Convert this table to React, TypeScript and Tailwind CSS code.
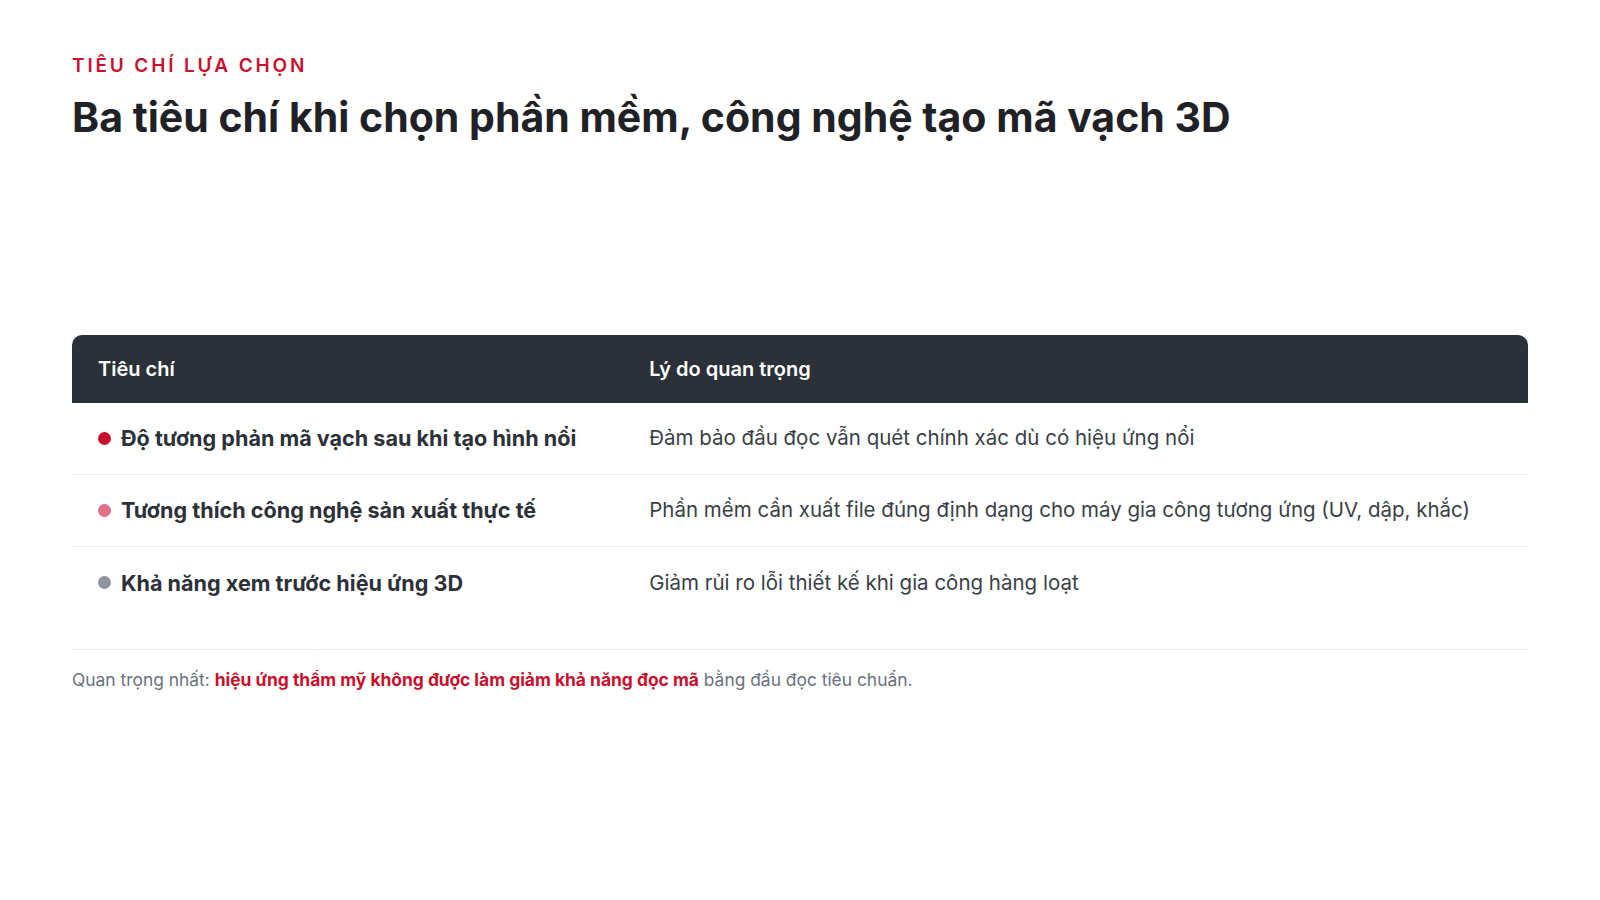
import React from 'react';

const rows = [
  {
    dot: 'bg-[#c8102e]',
    title: 'Độ tương phản mã vạch sau khi tạo hình nổi',
    reason: 'Đảm bảo đầu đọc vẫn quét chính xác dù có hiệu ứng nổi',
  },
  {
    dot: 'bg-[#e07189]',
    title: 'Tương thích công nghệ sản xuất thực tế',
    reason: 'Phần mềm cần xuất file đúng định dạng cho máy gia công tương ứng (UV, dập, khắc)',
  },
  {
    dot: 'bg-[#8e959e]',
    title: 'Khả năng xem trước hiệu ứng 3D',
    reason: 'Giảm rủi ro lỗi thiết kế khi gia công hàng loạt',
  },
];

const App: React.FC = () => {
  return (
    <div className="min-h-screen w-full bg-white px-[72px] pt-[52px] font-['Inter','Noto_Sans',sans-serif]">
      {/* Heading */}
      <p className="text-[19px] leading-[28px] font-semibold tracking-[0.15em] text-[#c8102e]">
        TIÊU CHÍ LỰA CHỌN
      </p>
      <h1 className="mt-[13px] text-[41px] leading-[48px] font-bold text-[#1f2126]">
        Ba tiêu chí khi chọn phần mềm, công nghệ tạo mã vạch 3D
      </h1>

      {/* Table */}
      <div className="mt-[194px] w-full">
        <div className="flex h-[68px] items-center rounded-t-[10px] bg-[#2c3139] text-[20px] font-semibold text-white">
          <div className="w-[38%] px-[26px]">Tiêu chí</div>
          <div className="flex-1 px-[24px]">Lý do quan trọng</div>
        </div>
        {rows.map((row, i) => (
          <div
            key={i}
            className={`flex h-[72px] items-center ${i < rows.length - 1 ? 'border-b border-[#ededed]' : ''}`}
          >
            <div className="flex w-[38%] items-center gap-[10px] px-[26px]">
              <span className={`h-[13px] w-[13px] shrink-0 rounded-full ${row.dot}`} />
              <span className="text-[21.6px] font-bold text-[#2c3139]">{row.title}</span>
            </div>
            <div className="flex-1 px-[24px] text-[20.5px] text-[#3a3f47]">{row.reason}</div>
          </div>
        ))}
      </div>

      {/* Footnote */}
      <div className="mt-[30px] border-t border-[#ededed] pt-[17px] text-[17.4px] leading-[26px] text-[#6b7280]">
        Quan trọng nhất:{' '}
        <span className="font-bold text-[#c8102e]">hiệu ứng thẩm mỹ không được làm giảm khả năng đọc mã</span>{' '}
        bằng đầu đọc tiêu chuẩn.
      </div>
    </div>
  );
};

export default App;
